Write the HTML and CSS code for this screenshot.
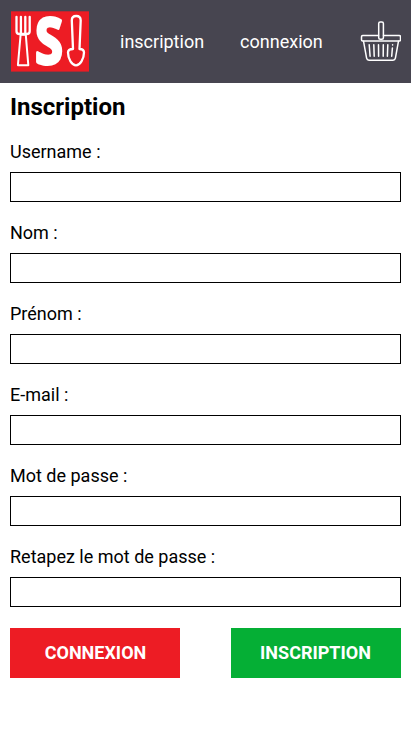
FILE: index.html
```html
<!DOCTYPE html>
<html lang="fr">
<head>
<meta charset="utf-8">
<meta name="viewport" content="width=device-width, initial-scale=1">
<title>Inscription</title>
<link rel="stylesheet" href="styles.css">
</head>
<body>
<header class="header">
  <a class="logo" href="#">
    <svg width="78" height="61" viewBox="11 11 78 61">
      <rect x="11" y="11.3" width="78" height="60.3" fill="#ed1c24"/>
      <g fill="none" stroke="#fff" stroke-width="2" stroke-linejoin="round" stroke-linecap="round">
        <path d="M16.5 16.8V31.2q0 2.8 3.2 2.8h6.8q3.2 0 3.2-2.8V16.8M20.9 16.8V33M25.3 16.8V33" stroke-width="2.3"/>
        <path d="M20.6 34.8L17.9 65.2h10.4L25.8 34.8z"/>
        <path d="M73 49L71.8 20.4q0-4.4 4.4-4.4t4.5 4.4L79.5 49q4.5 0 4.5 3.6c0 6.5-4 12.7-8 12.7s-8-6.2-8-12.7q0-3.6 5-3.6z" stroke-width="2.3"/>
      </g>
      <text class="logo-letter" transform="translate(49 63.6) scale(.78 1)" text-anchor="middle">S</text>
    </svg>
  </a>
  <nav class="nav">
    <a href="#">inscription</a>
    <a href="#">connexion</a>
  </nav>
  <a class="basket" href="#" aria-label="Panier">
    <svg width="41" height="41" viewBox="360 21 41 41" fill="none" stroke="#fff" stroke-width="1.5" stroke-linejoin="round" stroke-linecap="round">
      <path d="M378.5 35.5H362.7q-1.2 0-1.2 1.2v3.1q0 1.2 1.2 1.2h36.6q1.2 0 1.2-1.2v-3.1q0-1.2-1.2-1.2h-15.8"/>
      <path d="M363.5 41.2l3.1 17q.4 2 2.4 2h24q2 0 2.4-2l3.1-17"/>
      <rect x="378.7" y="22" width="4.7" height="17.3" rx="1.5"/>
      <path d="M369.2 44.7l.9 11.6M373.8 44.7l.4 11.6M378.5 44.7l.1 11.6M383.3 44.7l-.1 11.6M387.8 44.7l-.4 11.6M392.6 44.7v.4M392.4 48l-.7 8.3"/>
    </svg>
  </a>
</header>
<main class="main">
  <h1 class="title">Inscription</h1>
  <form class="form">
    <label class="field">Username :<input type="text"></label>
    <label class="field">Nom :<input type="text"></label>
    <label class="field">Prénom :<input type="text"></label>
    <label class="field">E-mail :<input type="email"></label>
    <label class="field">Mot de passe :<input type="password"></label>
    <label class="field">Retapez le mot de passe :<input type="password"></label>
    <div class="actions">
      <button class="button button-login" type="button">CONNEXION</button>
      <button class="button button-register" type="button">INSCRIPTION</button>
    </div>
  </form>
</main>
</body>
</html>
```
FILE: styles.css
```css
* {
  box-sizing: border-box;
}

body {
  margin: 0;
  background: #fff;
  color: #000;
  font: 18px/21px Roboto, sans-serif;
}

.header {
  display: flex;
  align-items: center;
  height: 83px;
  padding: 0 10px 0 11px;
  background: #474550;
}

.logo,
.basket {
  display: block;
  line-height: 0;
}

.logo svg {
  overflow: visible;
}

.logo-letter {
  font: 700 65px "Open Sans", sans-serif;
  fill: #fff;
  stroke: #fff;
  stroke-width: 3.2px;
  stroke-linejoin: round;
}

.nav {
  display: flex;
  gap: 36px;
  margin-left: 31px;
}

.basket {
  margin-left: auto;
}

.nav a {
  color: #fff;
  text-decoration: none;
}

.main {
  padding: 10px;
}

.title {
  margin: 0 0 20px;
  font-size: 24px;
  line-height: 28px;
}

.field {
  display: block;
  margin-bottom: 20px;
}

.field input {
  display: block;
  width: 100%;
  height: 30px;
  margin-top: 10px;
  padding: 0 8px;
  border: 1px solid #000;
  border-radius: 0;
  background: #fff;
  font: inherit;
}

.actions {
  display: flex;
  justify-content: space-between;
  padding-top: 1px;
}

.button {
  width: 170px;
  height: 50px;
  padding: 0 0 2px;
  border: 0;
  color: #fff;
  font: bold 18px Roboto, sans-serif;
}

.button-login {
  padding-left: 1px;
  background: #ed1c24;
}

.button-register {
  padding-right: 1px;
  background: #05af35;
}
```
